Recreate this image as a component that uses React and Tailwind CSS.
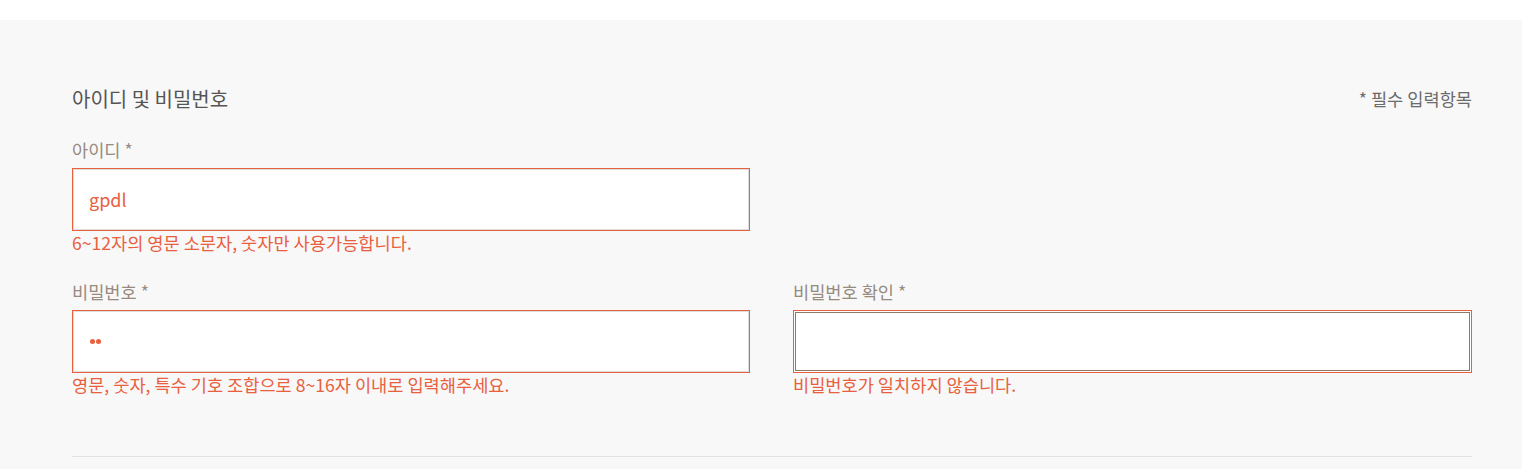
const FONT = { fontFamily: '"Noto Sans CJK KR", "Noto Sans", sans-serif' }

function Field({ label, value, type = 'text', error, focused }) {
  return (
    <div className="flex flex-col">
      <label className="text-[17.6px] leading-[22px] text-[#978a7f]">{label} *</label>
      <div
        className={
          'mt-[7px] h-[63px] border border-[#e9603f] bg-white ' +
          (focused ? 'shadow-[inset_0_0_0_1px_#fff,inset_0_0_0_2px_#8d7a66]' : 'shadow-[inset_0_0_0_1px_#dedede]')
        }
      >
        {type === 'password' ? (
          <div className="h-full flex items-center pl-[17px]">
            <span className="flex gap-[1px]">
              {value.split('').map((_, i) => (
                <span key={i} className="w-[5px] h-[5px] rounded-full bg-[#e9603f]" />
              ))}
            </span>
          </div>
        ) : (
          <div className="h-full flex items-center pl-[16px] text-[18px] text-[#e9603f]">{value}</div>
        )}
      </div>
      <p className="mt-[1px] text-[17.6px] leading-[22px] text-[#e9603f]">{error}</p>
    </div>
  )
}

export default function App() {
  return (
    <div className="min-h-screen bg-[#f8f8f8]" style={FONT}>
      <div className="h-[20px] bg-white" />
      <section className="pl-[72px] pr-[50px] pt-[65px]">
        <div className="flex items-center justify-between h-[28px]">
          <h2 className="text-[20px] text-[#555555]">아이디 및 비밀번호</h2>
          <span className="text-[17.6px] text-[#6b6b6b]">* 필수 입력항목</span>
        </div>

        <div className="grid grid-cols-[678px_1fr] gap-x-[43px] mt-[26px]">
          <Field label="아이디" value="gpdl" error="6~12자의 영문 소문자, 숫자만 사용가능합니다." />
        </div>

        <div className="grid grid-cols-[678px_1fr] gap-x-[43px] mt-[27px]">
          <Field label="비밀번호" value="aa" type="password" error="영문, 숫자, 특수 기호 조합으로 8~16자 이내로 입력해주세요." />
          <Field label="비밀번호 확인" value="" focused error="비밀번호가 일치하지 않습니다." />
        </div>

        <div className="mt-[60px] border-t border-[#e3e3e3]" />
      </section>
    </div>
  )
}
